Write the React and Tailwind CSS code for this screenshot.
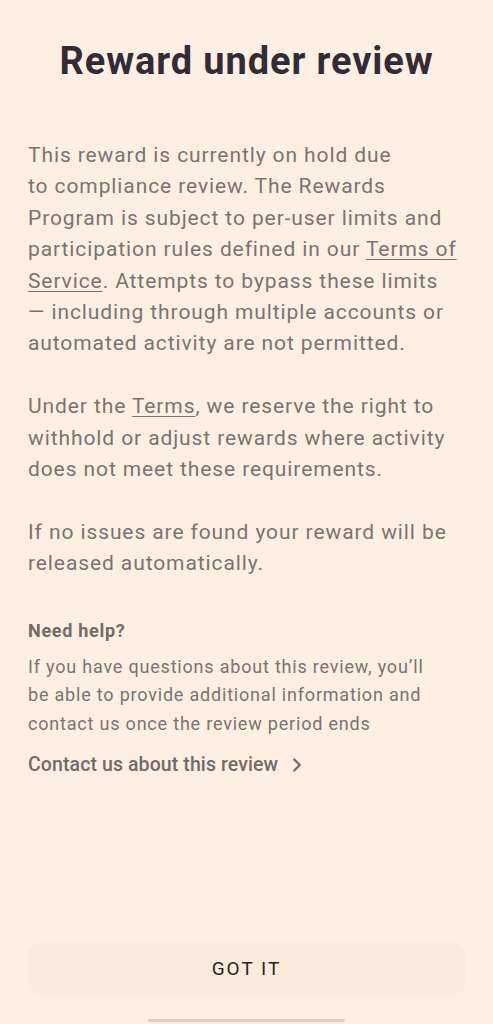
import { ChevronRight } from 'lucide-react';

function App() {
  return (
    <div className="flex flex-col h-[1024px] bg-[#fdf0e3] font-['Roboto',sans-serif] overflow-hidden">
      {/* Header */}
      <h1 className="pt-[39px] text-center text-[38px] leading-[44px] font-bold text-[#332b35] tracking-[0.9px]">
        Reward under review
      </h1>

      {/* Body */}
      <div className="px-[28px] pt-[57px] text-[21px] leading-[31.4px] text-[#7a736f] tracking-[0.9px]">
        <p>
          This reward is currently on hold due<br />
          to compliance review. The Rewards Program is subject to per-user limits and participation rules
          defined in our <span className="underline underline-offset-[3px] decoration-1">Terms of Service</span>.
          Attempts to bypass these limits {'—\u00a0including'} through multiple accounts or automated activity are
          not permitted.
        </p>
        <p className="mt-[31.4px]">
          Under the <span className="underline underline-offset-[3px] decoration-1">Terms</span>, we reserve the
          right to withhold or adjust rewards where activity does not meet these requirements.
        </p>
        <p className="mt-[31.4px]">
          If no issues are found your reward will be released automatically.
        </p>

        <div className="mt-[39px]">
          <h2 className="text-[18px] leading-[24px] font-bold text-[#716b67] tracking-[0.7px]">Need help?</h2>
          <p className="mt-[10px] w-[410px] text-[18px] leading-[28.5px] tracking-[0.8px]">
            If you have questions about this review, you’ll be able to provide additional information and
            contact us once the review period ends
          </p>
          <button className="mt-[13px] flex items-center gap-[8px] text-[19.5px] leading-[28px] font-medium text-[#716b67] tracking-[0.1px]">
            Contact us about this review
            <ChevronRight size={22} strokeWidth={2.5} />
          </button>
        </div>
      </div>

      <div className="flex-1" />

      {/* Footer */}
      <div className="px-[28px] pb-[24px]">
        <button className="w-full h-[52px] rounded-[12px] bg-[#fcebdd] text-[19px] font-normal tracking-[2px] text-[#2a2325]">
          GOT IT
        </button>
      </div>
      <div className="flex justify-center pb-[2px]">
        <div className="w-[197px] h-[3px] rounded-full bg-[#ddd0c0]" />
      </div>
    </div>
  );
}

export default App;
